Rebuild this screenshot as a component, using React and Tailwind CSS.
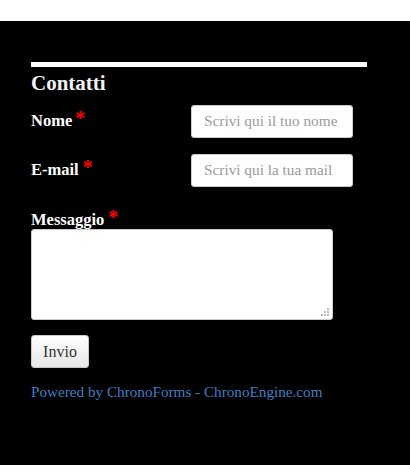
export default function App() {
  const serif = { fontFamily: '"Liberation Serif", "Times New Roman", serif' };
  const Star = ({ ml }) => (
    <span className={`text-[#ff0000] text-[20px] font-bold relative top-[-1px] leading-none ${ml}`}>*</span>
  );
  return (
    <div className="w-[410px] h-[465px] bg-black" style={serif}>
      <div className="h-[21px] bg-white" />
      <div className="pl-[31px] pt-[41px]">
        <div className="w-[336px] h-[5px] bg-white" />
        <h2 className="mt-[4px] text-[21px] leading-[24px] font-bold text-[#f2f2f2]">Contatti</h2>
        <div className="mt-[10px] flex items-center h-[33px]">
          <label className="w-[160px] text-[16.5px] font-bold text-white">
            Nome<Star ml="ml-[3px]" />
          </label>
          <div className="w-[162px] h-[33px] bg-white rounded-[3px] border border-[#cccccc] flex items-center pl-[12px] text-[15.3px] text-[#9a9a9a]">
            Scrivi qui il tuo nome
          </div>
        </div>
        <div className="mt-[16px] flex items-center h-[33px]">
          <label className="w-[160px] text-[16.5px] font-bold text-white">
            E-mail<Star ml="ml-[4px]" />
          </label>
          <div className="w-[162px] h-[33px] bg-white rounded-[3px] border border-[#cccccc] flex items-center pl-[12px] text-[15.3px] text-[#9a9a9a]">
            Scrivi qui la tua mail
          </div>
        </div>
        <label className="block mt-[21px] h-[21px] text-[16.5px] leading-[21px] font-bold text-white">
          Messaggio<Star ml="ml-[4px]" />
        </label>
        <div className="relative w-[302px] h-[91px] bg-white rounded-[3px] border border-[#cccccc]">
          <svg className="absolute right-[2px] bottom-[2px]" width="9" height="9" viewBox="0 0 9 9">
            <rect x="6" y="0" width="2" height="2" fill="#bbb" />
            <rect x="3" y="3" width="2" height="2" fill="#bbb" />
            <rect x="6" y="3" width="2" height="2" fill="#bbb" />
            <rect x="0" y="6" width="2" height="2" fill="#bbb" />
            <rect x="3" y="6" width="2" height="2" fill="#bbb" />
            <rect x="6" y="6" width="2" height="2" fill="#bbb" />
          </svg>
        </div>
        <button
          className="mt-[15px] w-[58px] h-[33px] rounded-[3px] border border-[#c8c8c8] bg-gradient-to-b from-white to-[#e6e6e6] text-[16px] text-[#333]"
          style={serif}
        >
          Invio
        </button>
        <div className="mt-[14px] text-[15.2px] leading-[20px] text-[#3d7fc4]">
          Powered by ChronoForms - ChronoEngine.com
        </div>
      </div>
    </div>
  );
}
